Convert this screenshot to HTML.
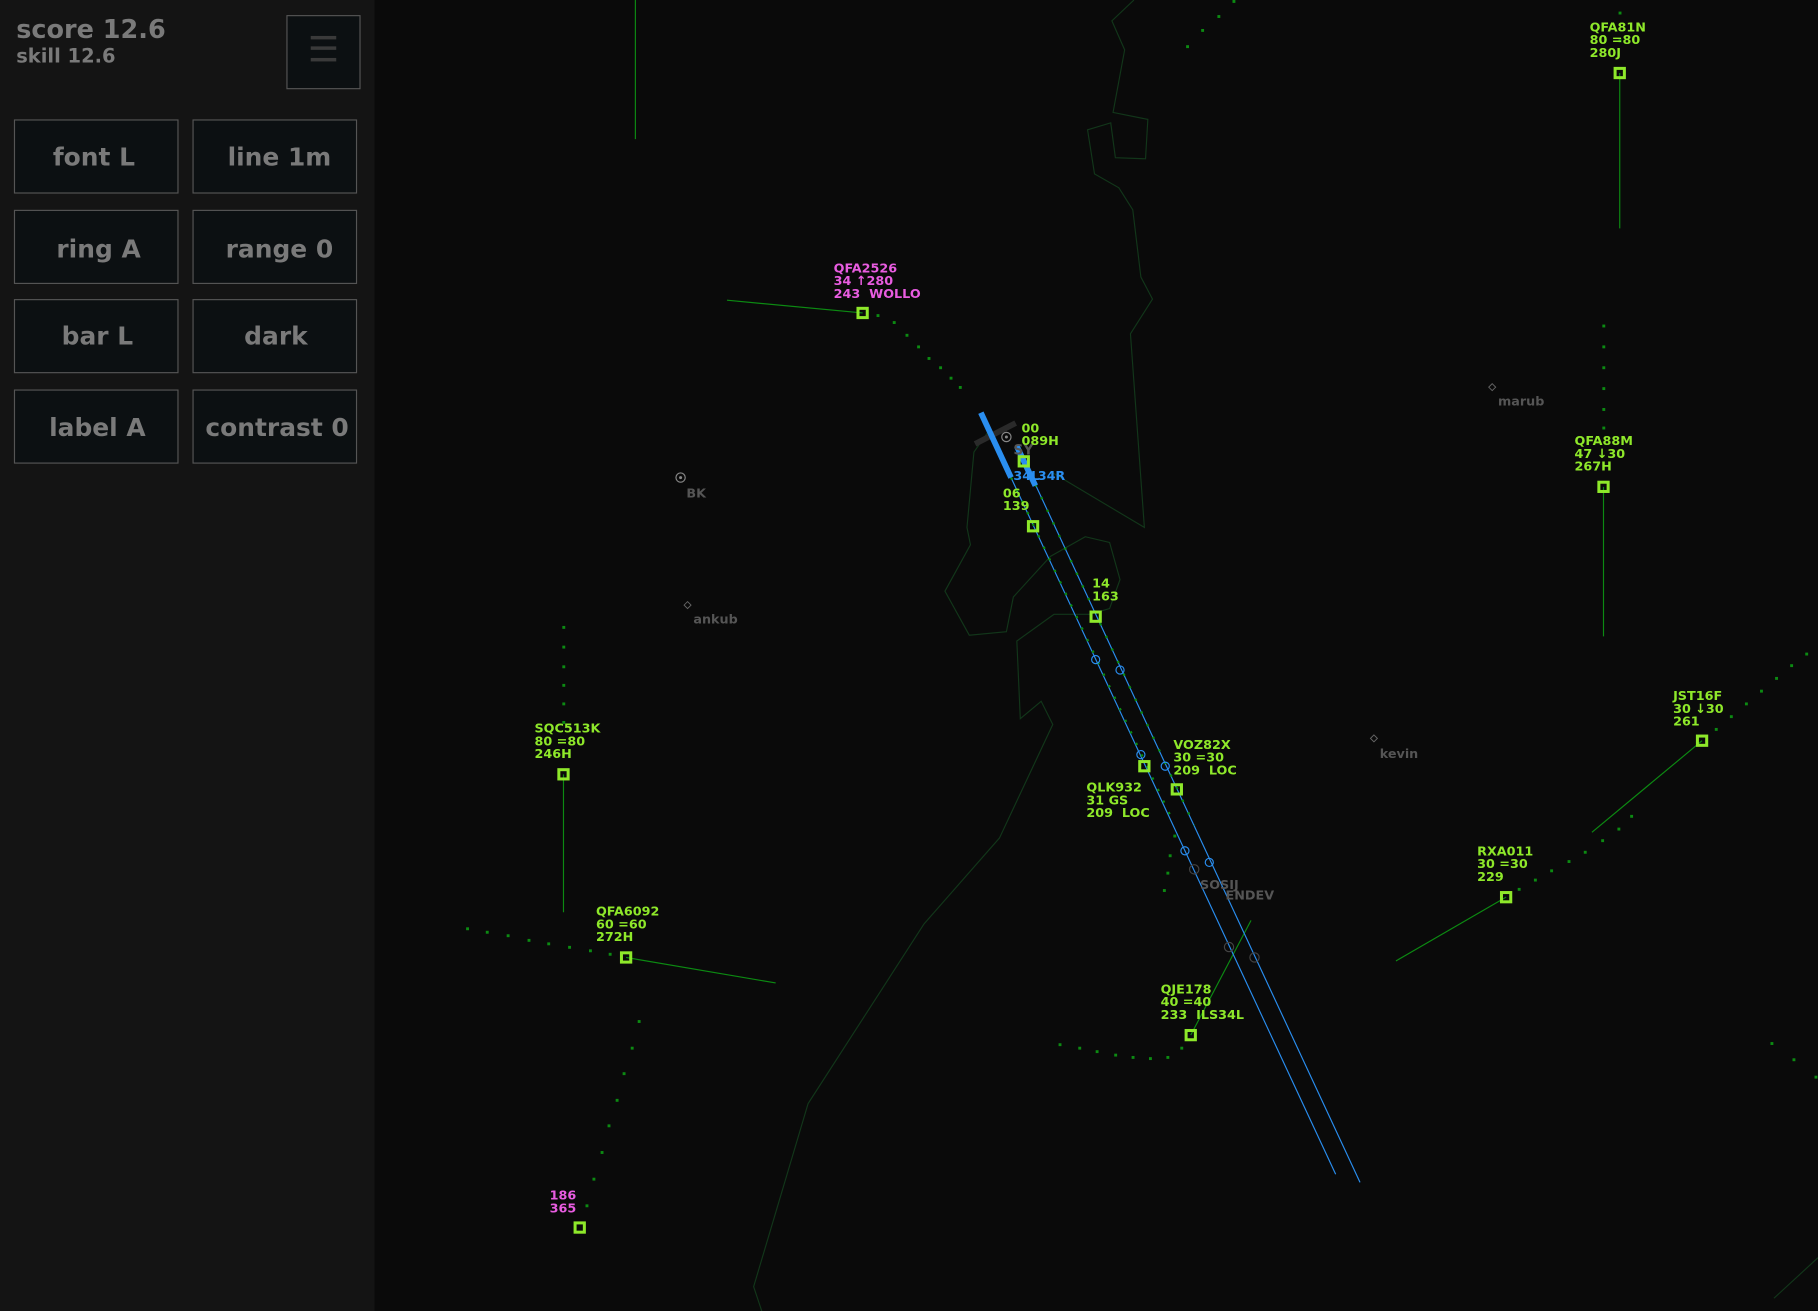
<!DOCTYPE html>
<html><head><meta charset="utf-8"><style>
html,body{margin:0;padding:0;background:#0a0a0a;overflow:hidden}
svg{display:block}
text{font-family:"DejaVu Sans","Liberation Sans",sans-serif;font-weight:bold;white-space:pre}
.l{fill:#8ee82a;font-size:11px}
.m{fill:#e85ce0;font-size:11px}
.f{fill:#555;font-size:11px}
.sq{fill:none;stroke:#8ee82a;stroke-width:2.6}
.c{fill:none;stroke:#12361a;stroke-width:1}
.tr{stroke:#0c8a12;stroke-width:1}
.d{fill:#0c8a12}
.bt{fill:#0c1012;stroke:#555;stroke-width:1}
.bx{fill:#7a7a7a;font-size:21.5px;text-anchor:middle}
</style></head><body>
<svg width="1818" height="1311" viewBox="0 0 1568 1131" preserveAspectRatio="none" xml:space="preserve">
<rect width="1568" height="1131" fill="#0a0a0a"/>
<g class="c">
<polyline points="978,0 959,18 970,43 960,97 990,103 988,137 962,136 958,106 938,112 944,150 965,162 977,181 984,239 994,258 975,288 987,455 908,408"/>
<polyline points="854,370 840,390 834,455 837,470 815,510 836,548 868,545 874,515 906,480 936,463 957,468 966,500 957,525 940,530 909,530 877,553 880,620 898,605 908,625 862,723 797,797 697,952 650,1110 657,1131"/>
<polyline points="1568,1085 1530,1120"/>
</g>
<line class="tr" x1="548" y1="0" x2="548" y2="120"/>
<line class="tr" x1="627" y1="259" x2="744" y2="270"/>
<line class="tr" x1="1397" y1="63" x2="1397" y2="197"/>
<line class="tr" x1="1383" y1="420" x2="1383" y2="549"/>
<line class="tr" x1="486" y1="668" x2="486" y2="787"/>
<line class="tr" x1="540" y1="826" x2="669" y2="848"/>
<line class="tr" x1="1468" y1="639" x2="1373" y2="718"/>
<line class="tr" x1="1299" y1="774" x2="1204" y2="829"/>
<line class="tr" x1="1027" y1="893" x2="1079" y2="794"/>
<g class="d">
<rect x="1023" y="39" width="2.5" height="2.5"/><rect x="1036" y="25" width="2.5" height="2.5"/><rect x="1050" y="13" width="2.5" height="2.5"/><rect x="1063" y="0" width="2.5" height="2.5"/>
<rect x="1396" y="10" width="2.5" height="2.5"/><rect x="1396" y="34" width="2.5" height="2.5"/>
<rect x="756" y="271" width="2.5" height="2.5"/><rect x="770" y="277" width="2.5" height="2.5"/><rect x="781" y="288" width="2.5" height="2.5"/><rect x="791" y="298" width="2.5" height="2.5"/><rect x="800" y="308" width="2.5" height="2.5"/><rect x="810" y="316" width="2.5" height="2.5"/><rect x="819" y="325" width="2.5" height="2.5"/><rect x="827" y="333" width="2.5" height="2.5"/>
<rect x="1382" y="280" width="2.5" height="2.5"/><rect x="1382" y="298" width="2.5" height="2.5"/><rect x="1382" y="316" width="2.5" height="2.5"/><rect x="1382" y="334" width="2.5" height="2.5"/><rect x="1382" y="352" width="2.5" height="2.5"/><rect x="1382" y="368" width="2.5" height="2.5"/>
<rect x="485" y="540" width="2.5" height="2.5"/><rect x="485" y="557" width="2.5" height="2.5"/><rect x="485" y="574" width="2.5" height="2.5"/><rect x="485" y="590" width="2.5" height="2.5"/><rect x="485" y="606" width="2.5" height="2.5"/><rect x="485" y="622" width="2.5" height="2.5"/>
<rect x="402" y="800" width="2.5" height="2.5"/><rect x="419" y="803" width="2.5" height="2.5"/><rect x="437" y="806" width="2.5" height="2.5"/><rect x="455" y="810" width="2.5" height="2.5"/><rect x="472" y="813" width="2.5" height="2.5"/><rect x="490" y="816" width="2.5" height="2.5"/><rect x="508" y="819" width="2.5" height="2.5"/><rect x="525" y="822" width="2.5" height="2.5"/>
<rect x="550" y="880" width="2.5" height="2.5"/><rect x="544" y="903" width="2.5" height="2.5"/><rect x="537" y="925" width="2.5" height="2.5"/><rect x="531" y="948" width="2.5" height="2.5"/><rect x="524" y="970" width="2.5" height="2.5"/><rect x="518" y="993" width="2.5" height="2.5"/><rect x="511" y="1016" width="2.5" height="2.5"/><rect x="505" y="1039" width="2.5" height="2.5"/>
<rect x="1557" y="563" width="2.5" height="2.5"/><rect x="1544" y="573" width="2.5" height="2.5"/><rect x="1531" y="584" width="2.5" height="2.5"/><rect x="1518" y="595" width="2.5" height="2.5"/><rect x="1505" y="606" width="2.5" height="2.5"/><rect x="1492" y="617" width="2.5" height="2.5"/><rect x="1479" y="628" width="2.5" height="2.5"/>
<rect x="1406" y="703" width="2.5" height="2.5"/><rect x="1395" y="714" width="2.5" height="2.5"/><rect x="1381" y="724" width="2.5" height="2.5"/><rect x="1366" y="734" width="2.5" height="2.5"/><rect x="1352" y="742" width="2.5" height="2.5"/><rect x="1337" y="750" width="2.5" height="2.5"/><rect x="1323" y="758" width="2.5" height="2.5"/><rect x="1309" y="766" width="2.5" height="2.5"/>
<rect x="913" y="900" width="2.5" height="2.5"/><rect x="930" y="903" width="2.5" height="2.5"/><rect x="945" y="906" width="2.5" height="2.5"/><rect x="961" y="909" width="2.5" height="2.5"/><rect x="976" y="911" width="2.5" height="2.5"/><rect x="991" y="912" width="2.5" height="2.5"/><rect x="1006" y="911" width="2.5" height="2.5"/><rect x="1018" y="903" width="2.5" height="2.5"/>
<rect x="1527" y="899" width="2.5" height="2.5"/><rect x="1546" y="913" width="2.5" height="2.5"/><rect x="1565" y="928" width="2.5" height="2.5"/>
<rect x="1008" y="737" width="2.5" height="2.5"/><rect x="1006" y="752" width="2.5" height="2.5"/><rect x="1003" y="767" width="2.5" height="2.5"/><rect x="1012" y="720" width="2.5" height="2.5"/>
</g>
<line x1="872" y1="412" x2="1152" y2="1013" stroke="#2a8ef0" stroke-width="1"/>
<line x1="893" y1="418" x2="1173" y2="1020" stroke="#2a8ef0" stroke-width="1"/>
<line x1="872" y1="412" x2="1010" y2="705" stroke="#0c8a12" stroke-width="2" stroke-dasharray="2,9"/>
<line x1="893" y1="418" x2="1030" y2="712" stroke="#0c8a12" stroke-width="2" stroke-dasharray="2,10"/>
<g fill="none" stroke="#2a8ef0" stroke-width="1">
<circle cx="945" cy="569" r="3.5"/><circle cx="984" cy="651" r="3.5"/><circle cx="1022" cy="734" r="3.5"/>
<circle cx="966" cy="578" r="3.5"/><circle cx="1005" cy="661" r="3.5"/><circle cx="1043" cy="744" r="3.5"/>
</g>
<g fill="none" stroke="#444" stroke-width="1">
<circle cx="1030" cy="750" r="4"/><circle cx="1060" cy="817" r="4"/><circle cx="1082" cy="826" r="4"/>
</g>
<line x1="841" y1="383" x2="876" y2="365" stroke="#2a2a2a" stroke-width="5"/>
<line x1="846" y1="356" x2="872" y2="412" stroke="#2a8ef0" stroke-width="5"/>
<line x1="877" y1="385" x2="893" y2="419" stroke="#2a8ef0" stroke-width="5"/>
<circle cx="868" cy="377" r="4" fill="none" stroke="#888" stroke-width="1"/><circle cx="868" cy="377" r="1.3" fill="#888"/>
<text x="874" y="392" class="f" style="font-size:12px">SY</text>
<text x="874" y="414" style="fill:#2a8ef0;font-size:11px">34L</text>
<text x="895" y="414" style="fill:#2a8ef0;font-size:11px">34R</text>
<circle cx="587" cy="412" r="4" fill="none" stroke="#888" stroke-width="1"/><circle cx="587" cy="412" r="1.3" fill="#888"/>
<text x="592" y="429" class="f">BK</text>
<path d="M593 519 l3 3 -3 3 -3 -3z M1287 331 l3 3 -3 3 -3 -3z M1185 634 l3 3 -3 3 -3 -3z" fill="none" stroke="#666" stroke-width="0.8"/>
<text x="598" y="538" class="f">ankub</text>
<text x="1292" y="350" class="f">marub</text>
<text x="1190" y="654" class="f">kevin</text>
<text x="1035" y="767" class="f">SOSIJ</text>
<text x="1057" y="776" class="f">ENDEV</text>
<g>
<rect class="sq" x="740" y="266" width="8" height="8"/>
<text class="m" x="719" y="235">QFA2526</text><text class="m" x="719" y="246">34 ↑280</text><text class="m" x="719" y="257">243  WOLLO</text>
<rect class="sq" x="1393" y="59" width="8" height="8"/>
<text class="l" x="1371" y="27">QFA81N</text><text class="l" x="1371" y="38">80 =80</text><text class="l" x="1371" y="49">280J</text>
<rect class="sq" x="879" y="394" width="8" height="8"/>
<text class="l" x="881" y="373">00</text><text class="l" x="881" y="384">089H</text>
<rect class="sq" x="887" y="450" width="8" height="8"/>
<text class="l" x="865" y="429">06</text><text class="l" x="865" y="440">139</text>
<rect class="sq" x="941" y="528" width="8" height="8"/>
<text class="l" x="942" y="507">14</text><text class="l" x="942" y="518">163</text>
<rect class="sq" x="1379" y="416" width="8" height="8"/>
<text class="l" x="1358" y="384">QFA88M</text><text class="l" x="1358" y="395">47 ↓30</text><text class="l" x="1358" y="406">267H</text>
<rect class="sq" x="482" y="664" width="8" height="8"/>
<text class="l" x="461" y="632">SQC513K</text><text class="l" x="461" y="643">80 =80</text><text class="l" x="461" y="654">246H</text>
<rect class="sq" x="983" y="657" width="8" height="8"/>
<text class="l" x="937" y="683">QLK932</text><text class="l" x="937" y="694">31 GS</text><text class="l" x="937" y="705">209  LOC</text>
<rect class="sq" x="1011" y="677" width="8" height="8"/>
<text class="l" x="1012" y="646">VOZ82X</text><text class="l" x="1012" y="657">30 =30</text><text class="l" x="1012" y="668">209  LOC</text>
<rect class="sq" x="1464" y="635" width="8" height="8"/>
<text class="l" x="1443" y="604">JST16F</text><text class="l" x="1443" y="615">30 ↓30</text><text class="l" x="1443" y="626">261</text>
<rect class="sq" x="1295" y="770" width="8" height="8"/>
<text class="l" x="1274" y="738">RXA011</text><text class="l" x="1274" y="749">30 =30</text><text class="l" x="1274" y="760">229</text>
<rect class="sq" x="536" y="822" width="8" height="8"/>
<text class="l" x="514" y="790">QFA6092</text><text class="l" x="514" y="801">60 =60</text><text class="l" x="514" y="812">272H</text>
<rect class="sq" x="1023" y="889" width="8" height="8"/>
<text class="l" x="1001" y="857">QJE178</text><text class="l" x="1001" y="868">40 =40</text><text class="l" x="1001" y="879">233  ILS34L</text>
<rect class="sq" x="496" y="1055" width="8" height="8"/>
<text class="m" x="474" y="1035">186</text><text class="m" x="474" y="1046">365</text>
</g>
<rect x="0" y="0" width="323" height="1131" fill="#141414"/>
<text x="14" y="33" style="fill:#7a7a7a;font-size:22px">score 12.6</text>
<text x="14" y="54" style="fill:#7a7a7a;font-size:16.8px">skill 12.6</text>
<rect class="bt" x="247.5" y="13.5" width="63" height="63"/>
<rect x="268" y="31" width="22" height="3" fill="#3a3a3a"/><rect x="268" y="40" width="22" height="3" fill="#3a3a3a"/><rect x="268" y="50" width="22" height="3" fill="#3a3a3a"/>
<rect class="bt" x="12.5" y="103.5" width="141" height="63"/><text class="bx" x="81" y="143">font L</text>
<rect class="bt" x="166.5" y="103.5" width="141" height="63"/><text class="bx" x="241" y="143">line 1m</text>
<rect class="bt" x="12.5" y="181.5" width="141" height="63"/><text class="bx" x="85" y="222">ring A</text>
<rect class="bt" x="166.5" y="181.5" width="141" height="63"/><text class="bx" x="241" y="222">range 0</text>
<rect class="bt" x="12.5" y="258.5" width="141" height="63"/><text class="bx" x="84" y="297">bar L</text>
<rect class="bt" x="166.5" y="258.5" width="141" height="63"/><text class="bx" x="238" y="297">dark</text>
<rect class="bt" x="12.5" y="336.5" width="141" height="63"/><text class="bx" x="84" y="376">label A</text>
<rect class="bt" x="166.5" y="336.5" width="141" height="63"/><text class="bx" x="239" y="376">contrast 0</text>
</svg>
</body></html>
